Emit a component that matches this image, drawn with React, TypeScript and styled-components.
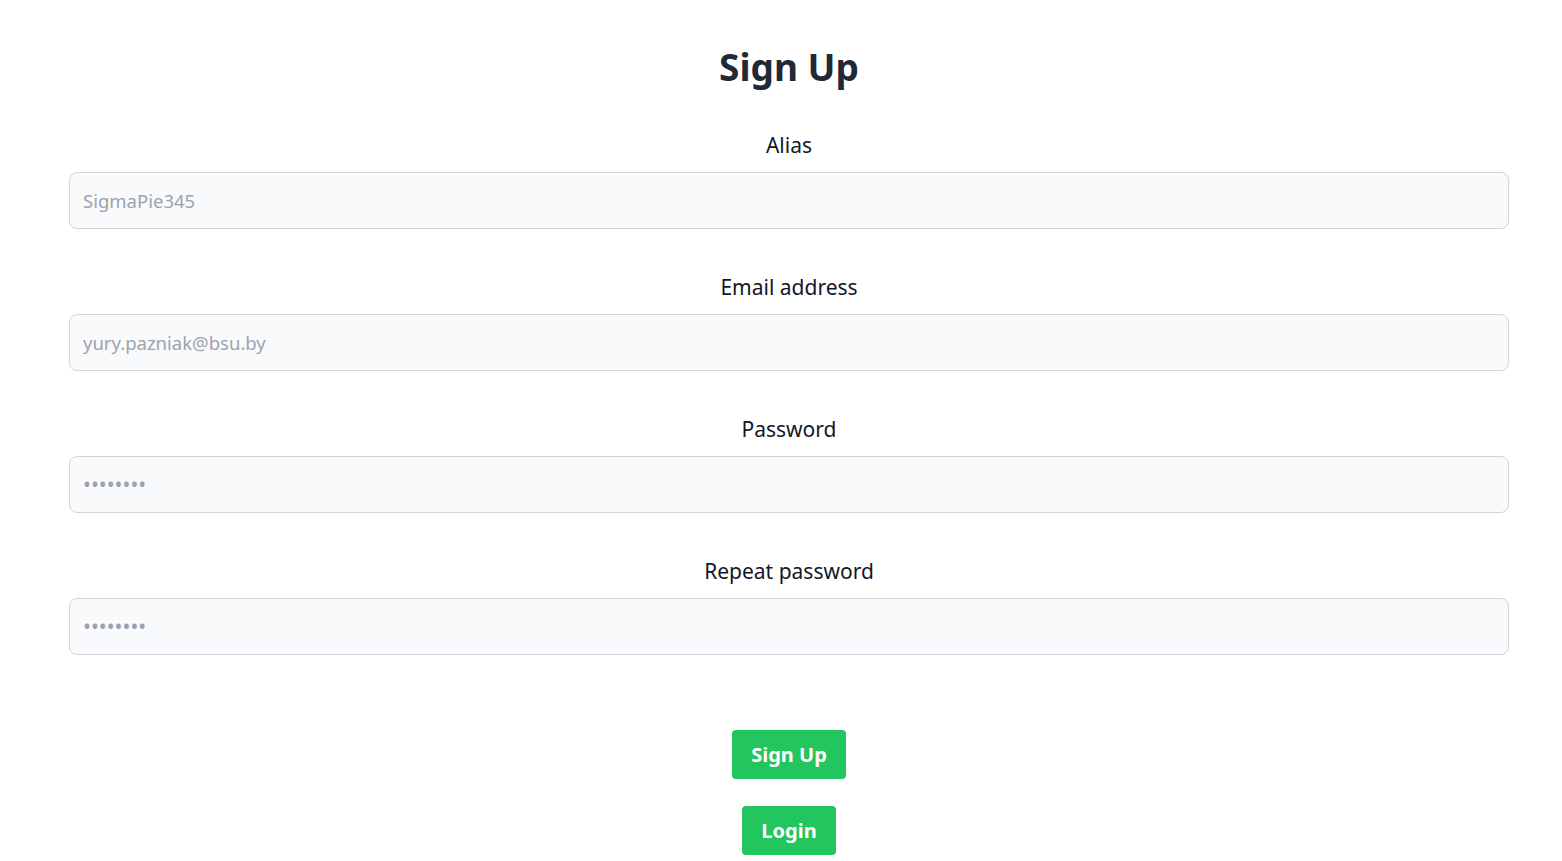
import styled, { createGlobalStyle } from 'styled-components';

const GlobalStyle = createGlobalStyle`
  html, body {
    margin: 0;
    padding: 0;
    background: #ffffff;
  }
  body {
    font-family: "Noto Sans", "Open Sans", "Liberation Sans", sans-serif;
    color: #1f2937;
  }
  * {
    box-sizing: border-box;
  }
`;

const Page = styled.main`
  display: flex;
  flex-direction: column;
  align-items: center;
  padding: 47px 53px 0 69px;
`;

const Title = styled.h1`
  margin: 0 0 44px;
  font-size: 37px;
  line-height: 40px;
  font-weight: 700;
  color: #1f2937;
`;

const Form = styled.form`
  width: 100%;
  display: flex;
  flex-direction: column;
  align-items: center;
`;

const Field = styled.div`
  width: 100%;
  display: flex;
  flex-direction: column;
  align-items: center;
  gap: 13px;
  margin-bottom: 44px;
`;

const Label = styled.label`
  font-size: 21px;
  line-height: 28px;
  color: #111827;
`;

const Input = styled.input<{ $masked?: boolean }>`
  width: 100%;
  height: 57px;
  padding: 0 13px;
  font-family: inherit;
  font-size: 18.5px;
  color: #111827;
  background: #f9fafb;
  border: 1px solid #d1d5db;
  border-radius: 8px;
  outline: none;
  &::placeholder {
    color: #9ca3af;
    font-size: ${({ $masked }) => ($masked ? '21px' : 'inherit')};
  }
`;

const Actions = styled.div`
  display: flex;
  flex-direction: column;
  align-items: center;
  gap: 27px;
  margin-top: 31px;
`;

const Button = styled.button`
  height: 49px;
  padding: 0 19px;
  font-family: inherit;
  font-size: 20px;
  font-weight: 700;
  color: #ffffff;
  background: #22c55e;
  border: none;
  border-radius: 4px;
  cursor: pointer;
`;

const fields = [
  { id: 'alias', label: 'Alias', type: 'text', placeholder: 'SigmaPie345' },
  { id: 'email', label: 'Email address', type: 'email', placeholder: 'yury.pazniak@bsu.by' },
  { id: 'password', label: 'Password', type: 'password', placeholder: '••••••••' },
  { id: 'repeat', label: 'Repeat password', type: 'password', placeholder: '••••••••' },
];

export default function App() {
  return (
    <>
      <GlobalStyle />
      <Page>
        <Title>Sign Up</Title>
        <Form onSubmit={(e) => e.preventDefault()}>
          {fields.map((f) => (
            <Field key={f.id}>
              <Label htmlFor={f.id}>{f.label}</Label>
              <Input
                id={f.id}
                type={f.type}
                placeholder={f.placeholder}
                $masked={f.type === 'password'}
              />
            </Field>
          ))}
          <Actions>
            <Button type="submit">Sign Up</Button>
            <Button type="button">Login</Button>
          </Actions>
        </Form>
      </Page>
    </>
  );
}
